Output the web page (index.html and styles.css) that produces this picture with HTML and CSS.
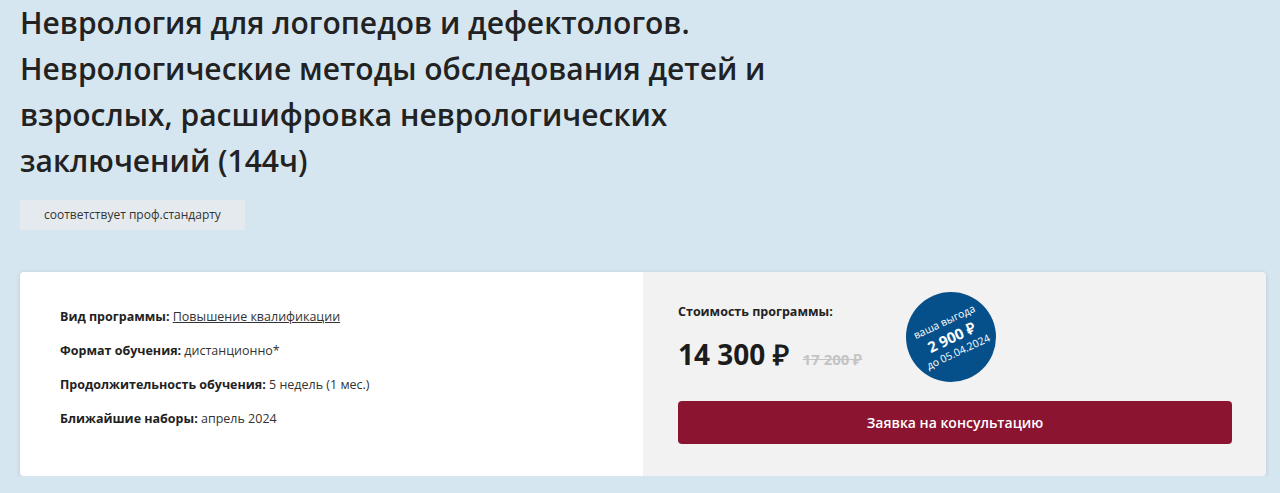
FILE: index.html
```html
<!DOCTYPE html>
<html lang="ru">
<head>
    <meta charset="UTF-8">
    <meta name="viewport" content="width=device-width, initial-scale=1.0">
    <title>Неврология для логопедов и дефектологов</title>
    <link rel="stylesheet" href="styles.css">
</head>
<body>
    <div class="page">
        <h1 class="course-title">Неврология для логопедов и дефектологов. Неврологические методы обследования детей и взрослых, расшифровка неврологических заключений (144ч)</h1>
        <div class="tag">соответствует проф.стандарту</div>

        <div class="card">
            <div class="card-info">
                <p><b>Вид программы:</b> <a href="#">Повышение квалификации</a></p>
                <p><b>Формат обучения:</b> дистанционно*</p>
                <p><b>Продолжительность обучения:</b> 5 недель (1 мес.)</p>
                <p><b>Ближайшие наборы:</b> апрель 2024</p>
            </div>
            <div class="card-price">
                <div class="price-top">
                    <div>
                        <div class="price-label">Стоимость программы:</div>
                        <div class="price-row">
                            <span class="price">14 300 ₽</span>
                            <span class="price-old">17 200 ₽</span>
                        </div>
                    </div>
                    <div class="badge">
                        <div class="badge-text">
                            <span class="badge-small">ваша выгода</span>
                            <span class="badge-big">2 900 ₽</span>
                            <span class="badge-small">до 05.04.2024</span>
                        </div>
                    </div>
                </div>
                <button class="btn">Заявка на консультацию</button>
            </div>
        </div>
    </div>
</body>
</html>
```

FILE: styles.css
```css
body {
    margin: 0;
    background: #d6e6f0;
    font-family: "Open Sans", Arial, sans-serif;
    color: #222;
}
.page {
    padding: 0 14px 0 20px;
}
.course-title {
    margin: 0;
    max-width: 790px;
    font-size: 30px;
    line-height: 46px;
    font-weight: 600;
    color: #222;
}
.tag {
    display: inline-block;
    margin-top: 16px;
    padding: 6px 24px;
    background: #e4eaed;
    font-size: 12px;
    line-height: 18px;
    color: #333;
}
.card {
    display: flex;
    margin-top: 42px;
    border-radius: 4px;
    overflow: hidden;
    box-shadow: 0 1px 4px rgba(0, 0, 0, 0.15);
    height: 204px;
}
.card-info {
    flex: 0 0 623px;
    background: #fff;
    padding: 35px 40px 0;
    box-sizing: border-box;
}
.card-info p {
    margin: 0 0 15px;
    font-size: 12.5px;
    line-height: 19px;
    color: #333;
}
.card-info b {
    font-weight: 700;
    color: #222;
}
.card-info a {
    color: #333;
}
.card-price {
    flex: 1;
    background: #f2f2f2;
    padding: 21px 34px 0 35px;
}
.price-top {
    display: flex;
    gap: 44px;
    align-items: flex-start;
}
.price-label {
    margin-top: 10px;
    font-size: 12.5px;
    font-weight: 700;
    color: #222;
}
.price-row {
    display: flex;
    align-items: baseline;
    gap: 14px;
    margin-top: 15px;
}
.price {
    font-size: 28px;
    font-weight: 700;
    color: #1c1c1c;
}
.price-old {
    font-size: 15px;
    font-weight: 700;
    color: #c4c4c4;
    text-decoration: line-through;
}
.badge {
    width: 90px;
    height: 90px;
    margin-top: -1px;
    border-radius: 50%;
    background: #05508a;
    color: #fff;
    display: flex;
    align-items: center;
    justify-content: center;
}
.badge-text {
    display: flex;
    flex-direction: column;
    align-items: center;
    transform: rotate(-25deg);
    line-height: 15px;
}
.badge-small {
    font-size: 10.5px;
}
.badge-big {
    font-size: 15px;
    font-weight: 700;
    line-height: 18px;
}
.btn {
    display: block;
    width: 100%;
    margin-top: 19px;
    height: 43px;
    border: none;
    border-radius: 4px;
    background: #8b1430;
    color: #fff;
    font-family: inherit;
    font-size: 14px;
    font-weight: 600;
    cursor: pointer;
}
```
